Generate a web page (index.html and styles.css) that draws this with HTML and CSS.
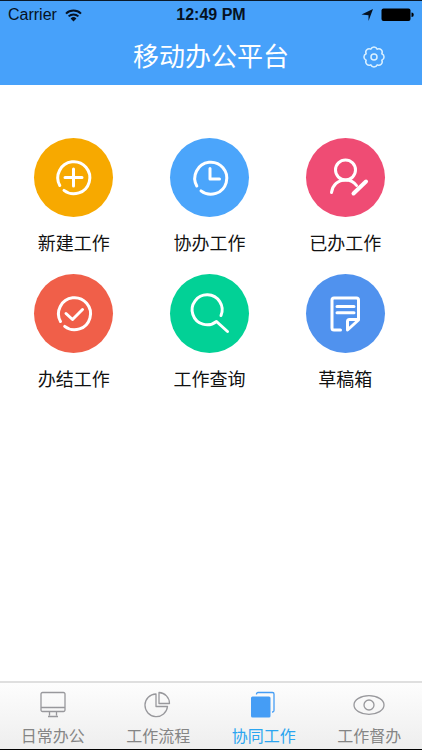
FILE: index.html
```html
<!DOCTYPE html>
<html lang="zh-CN">
<head>
<meta charset="utf-8">
<meta name="viewport" content="width=device-width, initial-scale=1">
<title>移动办公平台</title>
<link rel="stylesheet" href="styles.css">
</head>
<body>
<div class="app">
  <header class="header">
    <div class="status">
      <div class="status-left">
        <span>Carrier</span>
        <svg width="17" height="13" viewBox="0 0 17 13" aria-hidden="true">
          <path d="M1 4.6a10.8 10.8 0 0 1 15 0M3.6 7.4a7 7 0 0 1 9.8 0" fill="none" stroke="#061222" stroke-width="2"/>
          <path d="M5.6 9.4a4.2 4.2 0 0 1 5.8 0L8.500 12.400Z" fill="#061222"/>
        </svg>
      </div>
      <span class="time">12:49 PM</span>
      <div class="status-right">
        <svg width="12" height="12" viewBox="0 0 12 12" aria-hidden="true"><path d="M12 0L7.500 12V6.200L0.500 5.400Z" fill="#061222"/></svg>
        <svg width="33" height="14" viewBox="0 0 33 14" aria-hidden="true">
          <rect x="0.500" y="0.500" width="29" height="12.500" rx="2" fill="#000"/>
          <path d="M30.500 4.500a2 2 0 0 1 0 4.500Z" fill="#000"/>
        </svg>
      </div>
    </div>
    <div class="titlebar">
      <h1>移动办公平台</h1>
      <button class="settings" type="button" aria-label="设置">
        <svg width="24" height="24" viewBox="-12 -12 24 24" fill="none" stroke="#d9f0ff" stroke-width="1.500" stroke-linejoin="round">
          <path d="M-3.200 -7.800A3.400 3.400 0 0 1 3.200 -7.800A3.400 3.400 0 0 1 7.800 -3.200A3.400 3.400 0 0 1 7.800 3.200A3.400 3.400 0 0 1 3.200 7.800A3.400 3.400 0 0 1 -3.200 7.800A3.400 3.400 0 0 1 -7.800 3.200A3.400 3.400 0 0 1 -7.800 -3.200A3.400 3.400 0 0 1 -3.200 -7.800Z"/>
          <circle r="3"/>
        </svg>
      </button>
    </div>
  </header>

  <main class="grid">
    <a class="tile" href="#new">
      <span class="disc amber"><svg viewBox="0 0 79 79" aria-hidden="true">
        <path d="M25.800 47.500A16 16 0 1 1 30 52.400M39.500 31v17M31 39.500h17"/>
      </svg></span>
      <span>新建工作</span>
    </a>
    <a class="tile" href="#assist">
      <span class="disc blue"><svg viewBox="0 0 79 79" aria-hidden="true">
        <path d="M26.800 48A16 16 0 1 1 31 52.900M40 30.500v10.500h9.500"/>
      </svg></span>
      <span>协办工作</span>
    </a>
    <a class="tile" href="#done">
      <span class="disc pink"><svg viewBox="0 0 79 79" aria-hidden="true">
        <circle cx="39.500" cy="32" r="10"/>
        <path d="M25.500 54.500C26.500 47 32 42 39.500 42c5 0 8.500 2 11 5.500"/>
        <path class="thick" d="M47.500 55.500L60 43.500"/>
      </svg></span>
      <span>已办工作</span>
    </a>
    <a class="tile" href="#closed">
      <span class="disc red"><svg viewBox="0 0 79 79" aria-hidden="true">
        <path d="M26.500 47.500A16 16 0 1 1 30.700 52.400"/>
        <path d="M32 39.500l6.500 6L48.500 35.500"/>
      </svg></span>
      <span>办结工作</span>
    </a>
    <a class="tile" href="#search">
      <span class="disc green"><svg viewBox="0 0 79 79" aria-hidden="true">
        <path d="M51 41.500A15 15 0 1 0 46.500 47.500L57.500 57.500"/>
      </svg></span>
      <span>工作查询</span>
    </a>
    <a class="tile" href="#drafts">
      <span class="disc azure"><svg viewBox="0 0 79 79" aria-hidden="true">
        <path d="M34.500 56H28a2 2 0 0 1-2-2V26a2 2 0 0 1 2-2h22.500a2 2 0 0 1 2 2V46L41.500 56V47.500a2 2 0 0 1 2-2H52M31 32.500h17M31 38.800h17"/>
      </svg></span>
      <span>草稿箱</span>
    </a>
  </main>

  <nav class="tabs">
    <a class="tab" href="#daily">
      <svg width="32" height="28" viewBox="0 0 32 28" aria-hidden="true">
        <path d="M5.500 1.500h21a1.500 1.500 0 0 1 1.500 1.500v16a1.500 1.500 0 0 1-1.500 1.500h-21A1.500 1.500 0 0 1 4 19V3a1.500 1.500 0 0 1 1.500-1.500ZM4 16.500h24M12.500 20.500v4M19.500 20.500v4M11 25.500h10"/>
      </svg>
      <span>日常办公</span>
    </a>
    <a class="tab" href="#flow">
      <svg width="32" height="28" viewBox="0 0 32 28" aria-hidden="true">
        <path d="M14 3A11.300 11.300 0 1 0 25.500 15.500H14ZM17 1.500V12.500H27.500A11 11 0 0 0 17 1.500Z"/>
      </svg>
      <span>工作流程</span>
    </a>
    <a class="tab active" href="#collab" aria-current="page">
      <svg width="32" height="28" viewBox="0 0 32 28" aria-hidden="true">
        <path d="M8.500 3.500V3a1.500 1.500 0 0 1 1.500-1.500H24.500a1.500 1.500 0 0 1 1.500 1.500V19.500a1.500 1.500 0 0 1-1.500 1.500H24"/>
        <rect class="solid" x="3" y="5.500" width="19.500" height="21" rx="1.500"/>
      </svg>
      <span>协同工作</span>
    </a>
    <a class="tab" href="#supervise">
      <svg width="32" height="28" viewBox="0 0 32 28" aria-hidden="true">
        <ellipse cx="16" cy="14" rx="15" ry="9.300"/><circle cx="16" cy="14" r="5"/>
      </svg>
      <span>工作督办</span>
    </a>
  </nav>
</div>
</body>
</html>
```
FILE: styles.css
```css
* {
  box-sizing: border-box;
}

body {
  margin: 0;
  background: #fff;
  color: #111;
  font-family: "Liberation Sans", "Noto Sans CJK SC", sans-serif;
}

a {
  color: inherit;
  text-decoration: none;
}

svg {
  display: block;
}

.app {
  display: flex;
  flex-direction: column;
  min-height: 100vh;
  border-top: 1px solid #0b1a2a;
  border-bottom: 1px solid #000;
}

.header {
  background: #47a1fa;
}

.status {
  display: grid;
  grid-template-columns: 1fr auto 1fr;
  align-items: center;
  height: 28px;
  padding: 0 8px;
  color: #061222;
  font-size: 16px;
  line-height: 28px;
}

.status-left,
.status-right {
  display: flex;
  align-items: center;
  gap: 8px;
}

.status-right {
  justify-content: flex-end;
}

.time {
  font-weight: bold;
}

.titlebar {
  display: grid;
  grid-template-columns: 1fr auto 1fr;
  align-items: center;
  height: 56px;
}

.titlebar h1 {
  grid-column: 2;
  margin: 0;
  color: #fff;
  font-size: 26px;
  font-weight: normal;
  line-height: 56px;
}

.settings {
  justify-self: end;
  margin: 0 36px 0 0;
  padding: 0;
  border: 0;
  background: none;
}

.grid {
  flex: 1;
  display: grid;
  grid-template-columns: repeat(3, 1fr);
  align-content: start;
  row-gap: 16px;
  padding: 53px 9px 0 6px;
}

.tile {
  display: flex;
  flex-direction: column;
  align-items: center;
  gap: 13px;
  font-size: 18px;
  line-height: 28px;
}

.disc {
  width: 79px;
  height: 79px;
  border-radius: 50%;
}

.disc svg {
  fill: none;
  stroke: #fff;
  stroke-width: 3;
  stroke-linecap: round;
  stroke-linejoin: round;
}

.disc .thick {
  stroke-width: 4;
}

.amber { background: #f7a900; }
.blue { background: #4ba5fb; }
.pink { background: #ef4c74; }
.red { background: #f05f49; }
.green { background: #02d196; }
.azure { background: #5092ee; }

.tabs {
  display: grid;
  grid-template-columns: repeat(4, 1fr);
  border-top: 2px solid #dfdfdf;
  background: linear-gradient(#fdfdfd, #eee);
}

.tab {
  display: flex;
  flex-direction: column;
  align-items: center;
  gap: 6px;
  padding: 8px 0 0;
  color: #858585;
  font-size: 16px;
  line-height: 24px;
}

.tab svg {
  fill: none;
  stroke: #98989c;
  stroke-width: 1.300;
  stroke-linejoin: round;
}

.tab.active {
  color: #2ba5f0;
}

.tab.active svg {
  stroke: #459df5;
}

.tab .solid {
  fill: #459df5;
  stroke: none;
}
```
